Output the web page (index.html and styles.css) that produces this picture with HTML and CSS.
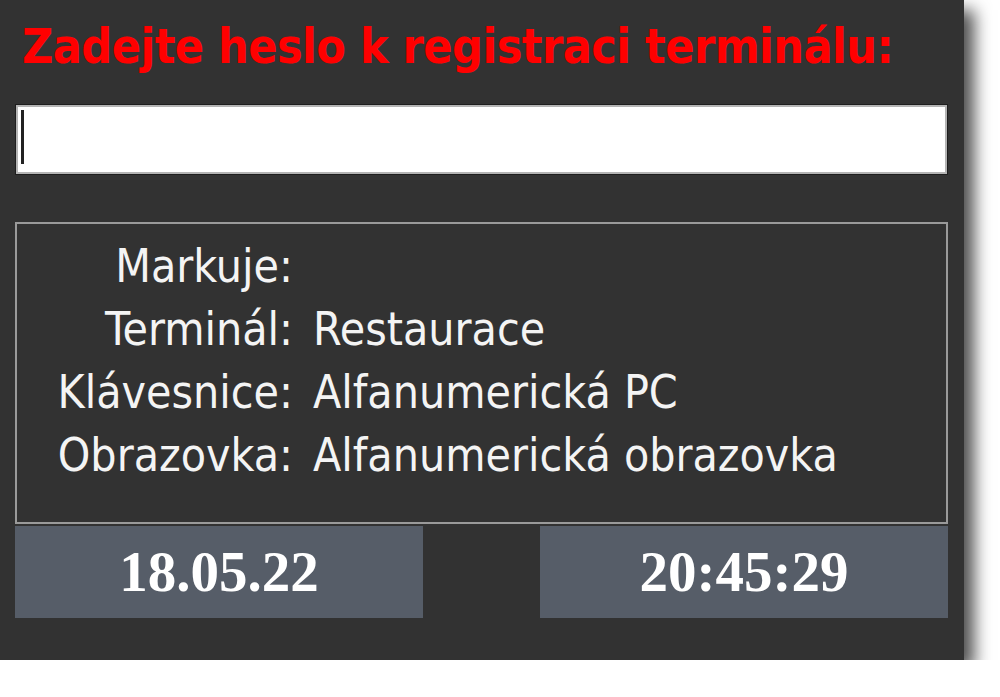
FILE: index.html
```html
<!DOCTYPE html>
<html lang="cs">
<head>
<meta charset="utf-8">
<title>Registrace terminálu</title>
<link rel="stylesheet" href="styles.css">
</head>
<body>
<div class="panel">
  <div class="title">Zadejte heslo k registraci terminálu:</div>
  <div class="field"><span class="caret"></span></div>
  <div class="info">
    <div class="label">Markuje:</div><div class="value"></div>
    <div class="label">Terminál:</div><div class="value">Restaurace</div>
    <div class="label">Klávesnice:</div><div class="value">Alfanumerická PC</div>
    <div class="label">Obrazovka:</div><div class="value">Alfanumerická obrazovka</div>
  </div>
  <div class="status">
    <div class="stamp">18.05.22</div>
    <div class="stamp">20:45:29</div>
  </div>
</div>
</body>
</html>
```
FILE: styles.css
```css
html, body {
  margin: 0;
  padding: 0;
  background: #ffffff;
}

.panel {
  width: 964px;
  height: 660px;
  box-sizing: border-box;
  background: #323232;
  padding: 0 16px 0 15px;
  display: flex;
  flex-direction: column;
  box-shadow: 10px 10px 16px rgba(0, 0, 0, 0.7);
  font-family: "DejaVu Sans Condensed", "DejaVu Sans", sans-serif;
}

.title {
  margin-top: 22px;
  padding-left: 7px;
  height: 48px;
  line-height: 48px;
  font-size: 48px;
  font-weight: bold;
  color: #ff0000;
  letter-spacing: -0.55px;
  white-space: nowrap;
}

.field {
  margin-top: 34px;
  height: 71px;
  box-sizing: border-box;
  background: #ffffff;
  border: 1px solid #1e1e1e;
  box-shadow: inset 0 0 0 2px #b4b4b4;
  padding: 5px 0 0 5px;
}

.caret {
  display: block;
  width: 3px;
  height: 54px;
  background: #222222;
}

.info {
  margin-top: 47px;
  height: 302px;
  box-sizing: border-box;
  border: 2px solid #9a9a9a;
  padding-top: 11px;
  display: grid;
  grid-template-columns: 276px 1fr;
  grid-auto-rows: 63px;
  column-gap: 20px;
  color: #f4f4f4;
  font-size: 46px;
  line-height: 63px;
  white-space: nowrap;
}

.label {
  text-align: right;
}

.status {
  margin-top: 2px;
  display: flex;
  justify-content: space-between;
}

.stamp {
  width: 408px;
  height: 92px;
  background: #565d68;
  color: #ffffff;
  text-align: center;
  line-height: 92px;
  font-family: "Liberation Serif", serif;
  font-weight: bold;
  font-size: 57px;
}
```
